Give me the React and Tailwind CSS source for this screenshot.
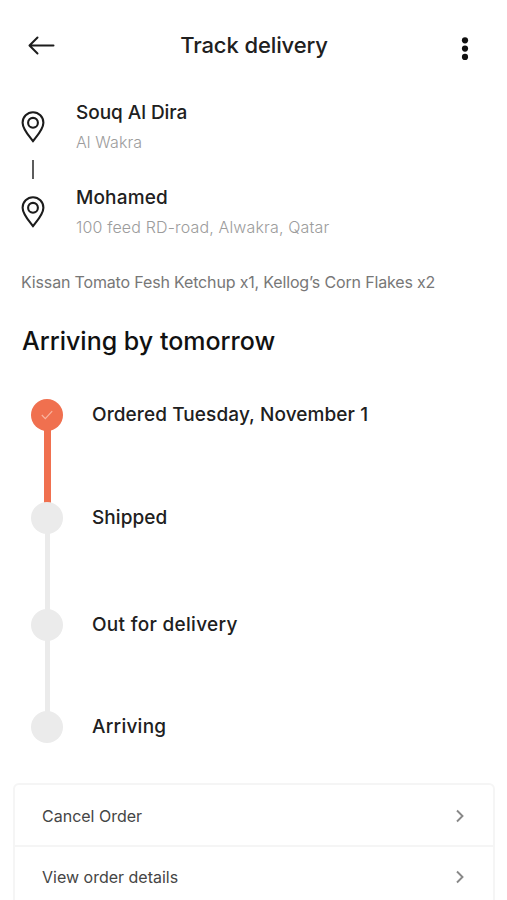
import React from 'react';

const STOPS = [
  { name: 'Souq Al Dira', address: 'Al Wakra', nameClass: 'tracking-[-0.05px]', addressClass: 'tracking-[0.1px]' },
  { name: 'Mohamed', address: '100 feed RD-road, Alwakra, Qatar', nameClass: 'tracking-[0.15px]', addressClass: 'tracking-[0.15px]' },
];

const STEPS = [
  { label: 'Ordered Tuesday, November 1', done: true, height: 'h-[103px]', line: 'w-[7px] bg-[#f0704f]', labelClass: 'tracking-[0.1px]' },
  { label: 'Shipped', height: 'h-[107px]', line: 'w-[5px] bg-[#ebebeb]', labelClass: 'tracking-[0.05px]' },
  { label: 'Out for delivery', height: 'h-[102px]', line: 'w-[5px] bg-[#ebebeb]', labelClass: 'tracking-[0.3px]' },
  { label: 'Arriving', height: 'h-8', labelClass: 'tracking-[0.25px]' },
];

const ACTIONS = ['Cancel Order', 'View order details'];

function PinIcon() {
  return (
    <svg className="block w-6 h-8" viewBox="0 0 24 32" fill="none" stroke="#1c1c1c" strokeWidth="2.1" strokeLinejoin="round">
      <path d="M12 30.3C10 27.2 1.6 18.6 1.6 11.7a10.4 10.4 0 0 1 20.8 0C22.4 18.6 14 27.2 12 30.3Z" />
      <circle cx="12" cy="11.8" r="4.9" />
    </svg>
  );
}

export default function App() {
  return (
    <div className="w-full h-[900px] overflow-hidden bg-white text-[#202020] font-['Inter',sans-serif] whitespace-nowrap">
      {/* Header */}
      <header className="h-[90px] pl-7 pr-[37px] flex items-center justify-between">
        <svg className="w-[27px] h-5" viewBox="0 0 27 20" fill="none" stroke="#1c1c1c" strokeWidth="2" strokeLinecap="round" strokeLinejoin="round">
          <path d="M25.5 10.5H1.8M9.5 2.5L1.5 10.5L9.5 18.5" />
        </svg>
        <h1 className="mr-[7px] mb-px text-[22px] leading-[30px] font-medium tracking-[-0.1px]">Track delivery</h1>
        <svg className="w-2.5 h-6 mt-[7px]" viewBox="0 0 10 24" fill="#111">
          <circle cx="5" cy="3.3" r="3.1" />
          <circle cx="5" cy="11.6" r="3.1" />
          <circle cx="5" cy="19.9" r="3.1" />
        </svg>
      </header>

      {/* Pickup and drop-off */}
      <section className="pl-[21px] pt-2 flex h-[160px]">
        <div className="w-6 pt-[13px] flex flex-col items-center">
          <PinIcon />
          <div className="w-[2px] h-[19px] my-[17px] mr-px bg-[#5c5c5c]" />
          <PinIcon />
        </div>
        <div className="pl-[31px]">
          {STOPS.map(stop => (
            <div key={stop.name} className="h-[84.5px]">
              <p className={`text-[19px] leading-[30px] font-medium ${stop.nameClass}`}>{stop.name}</p>
              <p className={`text-[16px] leading-[28px] font-light text-[#9c9c9c] ${stop.addressClass}`}>{stop.address}</p>
            </div>
          ))}
        </div>
      </section>

      {/* Summary */}
      <section className="pl-[22px] pt-5">
        <p className="-ml-px text-[16px] leading-6 text-[#777] tracking-[-0.16px]">Kissan Tomato Fesh Ketchup x1, Kellog’s Corn Flakes x2</p>
        <h2 className="mt-[30px] text-[25px] leading-[34px] font-medium text-[#111]">Arriving by tomorrow</h2>
      </section>

      {/* Timeline */}
      <ol className="pl-[31px] mt-[41px]">
        {STEPS.map(step => (
          <li key={step.label} className={`flex ${step.height}`}>
            <div className="w-8 flex flex-col items-center">
              <div className={`w-8 h-8 shrink-0 rounded-full flex items-center justify-center ${step.done ? 'bg-[#f0704f]' : 'bg-[#ebebeb]'}`}>
                {step.done && (
                  <svg className="w-3 h-2.5" viewBox="0 0 12 10" fill="none" stroke="#f9b49f" strokeWidth="1.2">
                    <path d="M0.8 5L4.3 8.6L11.2 1.2" />
                  </svg>
                )}
              </div>
              {step.line && <div className={`grow -my-px ${step.line}`} />}
            </div>
            <p className={`pl-[29px] text-[19px] leading-8 font-medium ${step.labelClass}`}>{step.label}</p>
          </li>
        ))}
      </ol>

      {/* Actions */}
      <section className="ml-[13px] mr-3 mt-10 h-[140px] border-2 border-[#f5f5f5] rounded-md">
        {ACTIONS.map(action => (
          <button key={action} className="w-full h-[62px] pt-0.5 last:pt-0 pl-[27px] pr-[29px] flex items-center justify-between border-b-2 border-[#f5f5f5]">
            <span className="text-[16px] leading-6 text-[#454545]">{action}</span>
            <svg className="w-2 h-3.5" viewBox="0 0 8 14" fill="none" stroke="#888" strokeWidth="1.9">
              <path d="M1 1.5L6.5 7L1 12.5" />
            </svg>
          </button>
        ))}
      </section>
    </div>
  );
}
